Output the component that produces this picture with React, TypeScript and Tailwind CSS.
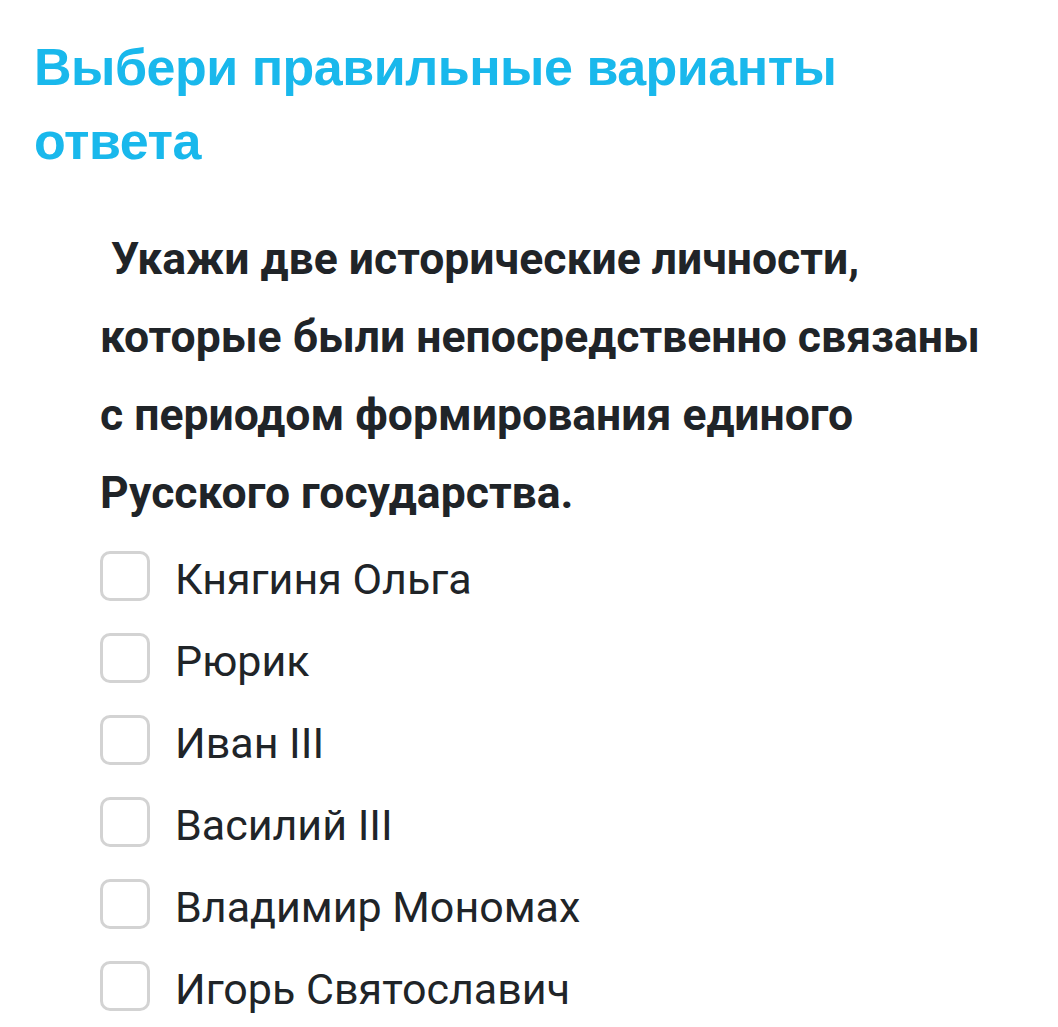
import React from "react";

const options = [
  "Княгиня Ольга",
  "Рюрик",
  "Иван III",
  "Василий III",
  "Владимир Мономах",
  "Игорь Святославич",
];

export default function App() {
  return (
    <div className="w-[1058px] h-[1027px] bg-white overflow-hidden">
      <h1
        className="pl-[34px] pt-[30px] text-[52px] leading-[74px] font-bold text-[#19b8ec] tracking-[-0.5px]"
        style={{ fontFamily: '"Liberation Sans", Arial, sans-serif' }}
      >
        Выбери правильные варианты
        <br />
        ответа
      </h1>
      <div className="pl-[100px] pt-[42px]">
        <p
          className="text-[44.5px] leading-[78px] font-bold text-[#202428] w-[920px]"
          style={{ fontFamily: 'Roboto, "Noto Sans", sans-serif' }}
        >
          {"\u00a0"}Укажи две исторические личности,
          <br />
          которые были непосредственно связаны
          <br />с периодом формирования единого
          <br />
          Русского государства.
        </p>
        <div className="mt-[19px] flex flex-col gap-[32px]">
          {options.map((o) => (
            <label key={o} className="flex items-start gap-[25px] h-[50px]">
              <span className="w-[50px] h-[50px] rounded-[10px] border-[3px] border-[#d3d3d3] bg-white shrink-0" />
              <span
                className="text-[43px] leading-[56px] text-[#202428] whitespace-nowrap"
                style={{ fontFamily: 'Roboto, "Noto Sans", sans-serif' }}
              >
                {o}
              </span>
            </label>
          ))}
        </div>
      </div>
    </div>
  );
}
